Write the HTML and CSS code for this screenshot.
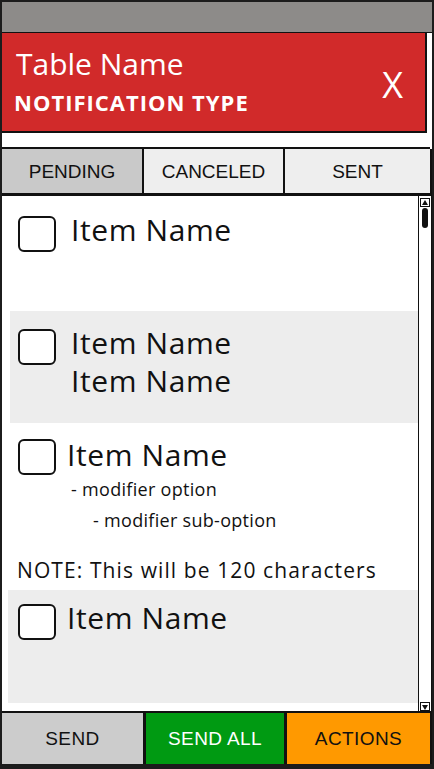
FILE: index.html
```html
<!DOCTYPE html>
<html>
<head>
    <title>Notification</title>
    <link rel="stylesheet" href="styles.css">
</head>
<body>
    <div class="phone">
        <div class="status-bar"></div>
        <div class="header">
            <div class="header-text">
                <div class="table-name">Table Name</div>
                <div class="notif-type">NOTIFICATION TYPE</div>
            </div>
            <div class="close">X</div>
        </div>
        <div class="spacer"></div>
        <div class="tabs">
            <div class="tab active">PENDING</div>
            <div class="tab">CANCELED</div>
            <div class="tab">SENT</div>
        </div>
        <div class="list">
            <div class="items">
                <div class="item item-1">
                    <div class="checkbox"></div>
                    <div class="item-body">
                        <div class="item-name">Item Name</div>
                    </div>
                </div>
                <div class="item item-2 shaded">
                    <div class="checkbox"></div>
                    <div class="item-body">
                        <div class="item-name">Item Name</div>
                        <div class="item-name">Item Name</div>
                    </div>
                </div>
                <div class="item item-3">
                    <div class="checkbox"></div>
                    <div class="item-body">
                        <div class="item-name">Item Name</div>
                        <div class="modifier">- modifier option</div>
                        <div class="modifier sub">- modifier sub-option</div>
                    </div>
                </div>
                <div class="note">NOTE: This will be 120 characters</div>
                <div class="item item-4 shaded">
                    <div class="checkbox"></div>
                    <div class="item-body">
                        <div class="item-name">Item Name</div>
                    </div>
                </div>
            </div>
            <div class="scrollbar">
                <div class="arrow up"></div>
                <div class="thumb"></div>
                <div class="track"></div>
                <div class="arrow down"></div>
            </div>
        </div>
        <div class="actions">
            <div class="btn send">SEND</div>
            <div class="btn send-all">SEND ALL</div>
            <div class="btn more">ACTIONS</div>
        </div>
    </div>
</body>
</html>
```

FILE: styles.css
```css
body {
    margin: 0;
    padding: 0;
    background: #fff;
    font-family: 'Open Sans', 'Liberation Sans', sans-serif;
}

.phone {
    width: 434px;
    height: 769px;
    box-sizing: border-box;
    border: 2px solid #1c1c1c;
    border-bottom-width: 5px;
    display: flex;
    flex-direction: column;
    overflow: hidden;
}

.status-bar {
    height: 30px;
    background: #8d8b89;
    border-bottom: 1px solid #111;
    flex-shrink: 0;
}

.header {
    height: 98px;
    margin-right: 5px;
    background: #d12a2a;
    border-right: 2px solid #111;
    border-bottom: 2px solid #111;
    display: flex;
    align-items: center;
    justify-content: space-between;
    padding: 0 22px 0 12px;
    color: #fff;
    flex-shrink: 0;
}

.table-name {
    font-size: 30px;
    line-height: 38px;
    padding-left: 2px;
    margin-top: -2px;
}

.notif-type {
    font-size: 22px;
    font-weight: bold;
    line-height: 30px;
    margin-top: 4px;
    letter-spacing: 1px;
}

.close {
    font-size: 36px;
    line-height: 40px;
    padding-top: 6px;
}

.spacer {
    height: 14px;
    margin-right: 2px;
    border-bottom: 2px solid #111;
    flex-shrink: 0;
}

.tabs {
    height: 44px;
    display: grid;
    grid-template-columns: 140px 139px 1fr;
    gap: 2px;
    background: #111;
    border-right: 2px solid #111;
    border-bottom: 3px solid #111;
    flex-shrink: 0;
}

.tab {
    background: #eeeeee;
    display: flex;
    align-items: center;
    justify-content: center;
    font-family: 'Liberation Sans', sans-serif;
    font-size: 19px;
    color: #111;
    padding-top: 2px;
}

.tab.active {
    background: #c9c9c9;
}

.list {
    flex: 1;
    display: flex;
    border-bottom: 2px solid #111;
    min-height: 0;
}

.items {
    flex: 1;
    display: flex;
    flex-direction: column;
    color: #111;
}

.item {
    display: flex;
    padding-left: 16px;
    box-sizing: border-box;
    flex-shrink: 0;
}

.item.shaded {
    background: #ededed;
    margin-left: 8px;
    padding-left: 8px;
}

.item-1 {
    height: 115px;
    padding-top: 20px;
}

.item-2 {
    height: 112px;
    padding-top: 18px;
}

.item-3 {
    height: 118px;
    padding-top: 16px;
}

.item-4 {
    height: 113px;
    padding-top: 14px;
    margin-left: 6px !important;
    padding-left: 10px !important;
}

.checkbox {
    width: 34px;
    height: 32px;
    border: 2px solid #111;
    border-radius: 6px;
    background: #fff;
    flex-shrink: 0;
}

.item-body {
    padding-left: 15px;
}

.item-name {
    font-size: 30px;
    line-height: 38px;
    letter-spacing: 0.6px;
    margin-top: -5px;
}

.item-name + .item-name {
    margin-top: 0;
}

.item-3 .item-body {
    padding-left: 11px;
    padding-top: 2px;
}

.item-4 .item-body {
    padding-left: 11px;
}

.modifier {
    font-size: 18px;
    line-height: 31px;
    padding-left: 4px;
    letter-spacing: 0.3px;
}

.modifier.sub {
    padding-left: 26px;
}

.note {
    font-size: 21px;
    height: 49px;
    line-height: 28px;
    padding: 15px 0 0 15px;
    box-sizing: border-box;
    letter-spacing: 1.1px;
    flex-shrink: 0;
}

.scrollbar {
    width: 12px;
    border-left: 1px solid #111;
    border-right: 1px solid #111;
    display: flex;
    flex-direction: column;
    align-items: center;
    padding-top: 2px;
}

.arrow {
    width: 10px;
    height: 9px;
    border: 1px solid #111;
    position: relative;
    box-sizing: border-box;
}

.arrow::after {
    content: '';
    position: absolute;
    left: 1px;
    border-left: 3px solid transparent;
    border-right: 3px solid transparent;
}

.arrow.up::after {
    top: 1px;
    border-bottom: 5px solid #111;
}

.arrow.down::after {
    top: 2px;
    border-top: 5px solid #111;
}

.thumb {
    width: 6px;
    height: 20px;
    background: #111;
    border-radius: 3px;
    margin-top: 1px;
}

.track {
    flex: 1;
}

.actions {
    height: 51px;
    display: grid;
    grid-template-columns: 141px 138px 1fr;
    gap: 3px;
    background: #111;
    border-right: 2px solid #111;
    flex-shrink: 0;
}

.btn {
    display: flex;
    align-items: center;
    justify-content: center;
    font-family: 'Liberation Sans', sans-serif;
    font-size: 19px;
    letter-spacing: 0.4px;
    color: #111;
}

.btn.send {
    background: #cccccc;
}

.btn.send-all {
    background: #009a12;
    color: #fff;
}

.btn.more {
    background: #ff9900;
}
```
